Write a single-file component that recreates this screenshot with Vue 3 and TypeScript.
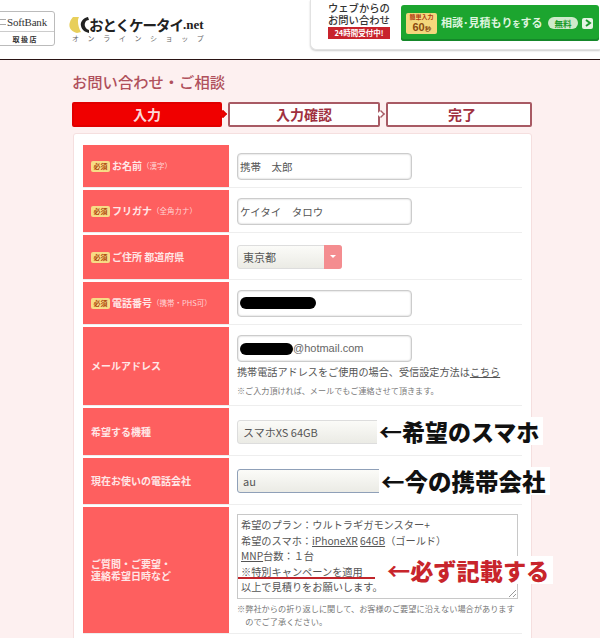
<script setup lang="ts">
const steps = [
  { label: '入力', active: true },
  { label: '入力確認', active: false },
  { label: '完了', active: false },
]
</script>

<template>
  <div class="page">
    <header class="header">
      <div class="sb">
        <div class="sb-top"><span class="sb-bars"></span>SoftBank</div>
        <div class="sb-bot">取 扱 店</div>
      </div>
      <div class="logo">
        <div class="logo-top">
          <svg class="logo-mark" width="20" height="16" viewBox="0 0 20 16">
            <path d="M4 0 L10 0 C8 3 9 10 12 15 L8 16 C2 15 -1 10 1 5 C1.500 3 3 1 4 0 Z" fill="#e8cf5a" />
            <path d="M19 0 C14 1 11 5 12 9 C13 13 16 15 20 16 L20 13 C17 12 15 9 16 6 C16.500 4 18 3 20 3 Z" fill="#222" />
          </svg>
          <span class="logo-name">おとくケータイ</span><span class="logo-net">.net</span>
        </div>
        <div class="logo-sub">オンラインショップ</div>
      </div>
      <div class="cta">
        <div class="cta-text">
          <div class="cta-line">ウェブからの</div>
          <div class="cta-line">お問い合わせ</div>
          <div class="cta-badge">24時間受付中!</div>
        </div>
        <div class="cta-btn">
          <div class="cta-time"><span class="t1">簡単入力</span><span class="t2">60<small>秒</small></span></div>
          <span class="cta-label">相談･見積もり<span class="wo">を</span>する</span>
          <span class="cta-free">無料</span>
          <span class="cta-arrow">
            <svg width="8" height="8" viewBox="0 0 8 8"><path d="M2 1 L6 4 L2 7" fill="none" stroke="#1c9a2c" stroke-width="2" /></svg>
          </span>
        </div>
      </div>
    </header>

    <main class="main">
      <h1 class="title">お問い合わせ・ご相談</h1>
      <div class="steps">
        <div v-for="s in steps" :key="s.label" class="step" :class="{ active: s.active }">{{ s.label }}</div>
      </div>

      <section class="card">
        <div class="row r1">
          <div class="lab"><span class="req">必須</span><b>お名前</b><small>（漢字）</small></div>
          <div class="val"><div class="input">携帯　太郎</div></div>
        </div>
        <div class="row r1">
          <div class="lab"><span class="req">必須</span><b>フリガナ</b><small>（全角カナ）</small></div>
          <div class="val"><div class="input">ケイタイ　タロウ</div></div>
        </div>
        <div class="row r3">
          <div class="lab"><span class="req">必須</span><b>ご住所 都道府県</b></div>
          <div class="val">
            <div class="select small">東京都<span class="caret"></span></div>
          </div>
        </div>
        <div class="row r1">
          <div class="lab"><span class="req">必須</span><b>電話番号</b><small>（携帯・PHS可）</small></div>
          <div class="val"><div class="input"><span class="mask phone"></span></div></div>
        </div>
        <div class="row r5">
          <div class="lab"><b>メールアドレス</b></div>
          <div class="val top">
            <div class="input mail"><span class="mask email"></span>@hotmail.com</div>
            <p class="help">携帯電話アドレスをご使用の場合、受信設定方法は<u>こちら</u></p>
            <p class="note">※ご入力頂ければ、メールでもご連絡させて頂きます。</p>
          </div>
        </div>
        <div class="row r6">
          <div class="lab"><b>希望する機種</b></div>
          <div class="val">
            <div class="select wide">スマホXS 64GB</div>
            <div class="anno black a1"><span class="arrow">←</span>希望のスマホ</div>
          </div>
        </div>
        <div class="row r7">
          <div class="lab"><b>現在お使いの電話会社</b></div>
          <div class="val">
            <div class="select wide focus">au</div>
            <div class="anno black a2"><span class="arrow">←</span>今の携帯会社</div>
          </div>
        </div>
        <div class="row r8">
          <div class="lab"><b>ご質問・ご要望・<br />連絡希望日時など</b></div>
          <div class="val top2">
            <div class="textarea">
              <div>希望のプラン：ウルトラギガモンスター+</div>
              <div>希望のスマホ：<u>iPhoneXR</u> <u>64GB</u>（ゴールド）</div>
              <div><u>MNP</u>台数：１台</div>
              <div class="mark">※特別キャンペーンを適用</div>
              <div>以上で見積りをお願いします。</div>
              <svg class="grip" width="8" height="8" viewBox="0 0 8 8"><path d="M1 8 L8 1 M5 8 L8 5" stroke="#999" /></svg>
            </div>
            <p class="note n2">※弊社からの折り返しに関して、お客様のご要望に沿えない場合があります<br />　のでご了承ください。</p>
            <div class="anno red"><span class="arrow">←</span>必ず記載する</div>
          </div>
        </div>
      </section>
    </main>
  </div>
</template>

<style>
html, body { margin: 0; padding: 0; background: #fdf0f0; }
</style>

<style scoped>
.page {
  width: 600px;
  height: 638px;
  overflow: hidden;
  background: #fdf0f0;
  font-family: "Noto Sans CJK JP", "Liberation Sans", sans-serif;
  color: #444;
}
.header {
  height: 59px;
  background: #fff;
  border-bottom: 1px solid #2a1414;
  display: flex;
  align-items: flex-start;
  overflow: hidden;
  box-sizing: content-box;
}
.sb {
  margin: 11px 0 0 -6px;
  width: 61px;
  height: 35px;
  box-sizing: border-box;
  border: 1px solid #bbb;
  border-radius: 3px;
  flex: none;
}
.sb-top {
  height: 19px;
  border-bottom: 1px solid #ccc;
  font: 11px/18px "Liberation Serif", serif;
  color: #333;
  display: flex;
  align-items: center;
  gap: 1px;
  padding-left: 5px;
  letter-spacing: -.2px;
}
.sb-bars {
  width: 6px;
  height: 4px;
  border-top: 1px solid #aaa;
  border-bottom: 1px solid #aaa;
  flex: none;
}
.sb-bot { font-size: 7px; line-height: 14px; font-weight: 700; text-align: center; color: #333; }
.logo { margin: 16px 0 0 14px; width: 140px; flex: none; }
.logo-top { display: flex; align-items: center; height: 17px; }
.logo-mark { flex: none; }
.logo-name { font-size: 14.5px; line-height: 17px; font-weight: 700; color: #222; letter-spacing: -1px; white-space: nowrap; }
.logo-net { font: 700 13px/17px "Liberation Serif", serif; color: #222; }
.logo-sub { font-size: 7px; letter-spacing: 8.6px; color: #666; line-height: 10px; margin: 0 0 0 3px; white-space: nowrap; }
.cta {
  margin-left: auto;
  width: 290px;
  height: 50px;
  box-sizing: border-box;
  background: #fff;
  border: 1px solid #e2e2e2;
  border-top: 0;
  border-right: 0;
  border-radius: 0 0 0 6px;
  box-shadow: 0 1px 2px #ccc;
  display: flex;
  align-items: flex-start;
  flex: none;
}
.cta-text { width: 90px; padding: 2px 0 0 17px; box-sizing: border-box; }
.cta-line { font-size: 10.3px; line-height: 12px; font-weight: 500; color: #333; white-space: nowrap; }
.cta-badge {
  background: #c8232c;
  color: #fff;
  font-size: 7.5px;
  font-weight: 700;
  line-height: 12px;
  height: 12px;
  width: 62px;
  margin: 1px 0 0 0;
  white-space: nowrap;
  text-align: center;
}
.cta-btn {
  margin: 5px 0 0 0;
  width: 198px;
  height: 36px;
  background: #1ca52f;
  border-radius: 3px;
  box-shadow: inset 0 -2px 0 #15872a;
  display: flex;
  align-items: center;
  padding-left: 5px;
  box-sizing: border-box;
  color: #fff;
}
.cta-time {
  width: 31px;
  height: 21px;
  background: #f4d77c;
  border-radius: 2px;
  display: flex;
  flex-direction: column;
  align-items: center;
  color: #8a4a10;
  flex: none;
}
.t1 { font-size: 6px; line-height: 8px; font-weight: 700; color: #b03a10; white-space: nowrap; }
.t2 { font: 700 11px/12px "Liberation Sans", sans-serif; }
.t2 small { font-size: 6px; }
.cta-label { font-size: 11px; line-height: 14px; font-weight: 700; margin-left: 4px; white-space: nowrap; color: #dff5df; width: 104px; flex: none; }
.wo { font-size: 8px; }
.cta-free {
  background: #cfeacb;
  color: #1c9a2c;
  font-size: 8.5px;
  font-weight: 700;
  width: 30px;
  height: 12px;
  line-height: 12px;
  border-radius: 6px;
  text-align: center;
  margin-left: 3px;
  flex: none;
}
.cta-arrow {
  width: 11px;
  height: 11px;
  background: #e4f4e2;
  border-radius: 2px;
  margin-left: 4px;
  display: flex;
  align-items: center;
  justify-content: center;
  flex: none;
}
.main { padding: 0 68px 0 72px; }
.title { margin: 0; padding-top: 11px; height: 31px; font-size: 15.3px; line-height: 20px; font-weight: 500; color: #b0505c; white-space: nowrap; }
.steps { display: flex; gap: 6px; height: 25px; }
.step {
  flex: 152px 0 0;
  position: relative;
  box-sizing: border-box;
  background: #fff;
  border: 2px solid #a85a64;
  border-radius: 2px;
  text-align: center;
  font-size: 14px;
  font-weight: 700;
  line-height: 21px;
  color: #a03040;
}
.step:first-child { flex-basis: 150px; }
.step:last-child { flex-basis: 146px; padding-left: 6px; }
.step.active { background: #f00000; border-color: #e00000; color: #fbd8d8; }
.step:not(:last-child)::after {
  content: "";
  position: absolute;
  right: -7px;
  top: 6px;
  width: 8px;
  height: 8px;
  background: #fff;
  border-top: 2px solid #a85a64;
  border-right: 2px solid #a85a64;
  transform: rotate(45deg) scale(.7);
  box-sizing: border-box;
}
.step.active::after { background: #f00000; border-color: #e00000; }
.card {
  margin-top: 6px;
  width: 459px;
  margin-left: 1px;
  box-sizing: border-box;
  background: #fff;
  border: 1px solid #f5dfdf;
  border-radius: 3px;
  padding: 11px 9px 0 9px;
  height: 520px;
}
.row { display: flex; border-bottom: 1px solid #eee; margin-bottom: 2px; box-sizing: border-box; }
.r1 { height: 43px; }
.r3 { height: 45px; }
.r5 { height: 79px; }
.r6 { height: 48px; }
.r7 { height: 47px; }
.r8 { height: 127px; }
.lab {
  width: 146px;
  flex: none;
  background: #fe5f5f;
  color: #ffe6e6;
  display: flex;
  align-items: center;
  padding-left: 8px;
  box-sizing: border-box;
  font-size: 10px;
  white-space: nowrap;
  line-height: 12px;
}
.lab b { font-weight: 700; }
.lab small { font-size: 7.5px; margin-left: 0; color: #ffd5d5; }
.req {
  background: #f7dc85;
  color: #b04a10;
  font-size: 7px;
  font-weight: 700;
  width: 19px;
  height: 11px;
  line-height: 11px;
  border-radius: 2px;
  text-align: center;
  margin-right: 2px;
  flex: none;
}
.val {
  flex: 1;
  position: relative;
  padding-left: 8px;
  display: flex;
  flex-direction: column;
  justify-content: center;
  min-width: 0;
}
.val.top { justify-content: flex-start; padding-top: 8px; }
.val.top2 { justify-content: flex-start; padding-top: 7px; }
.input {
  width: 175px;
  height: 27px;
  box-sizing: border-box;
  background: #fff;
  border: 1px solid #ccc;
  box-shadow: inset 0 0 2px #bbb;
  border-radius: 4px;
  font-size: 10.5px;
  line-height: 25px;
  padding-left: 2px;
  color: #555;
  display: flex;
  align-items: center;
  white-space: nowrap;
}
.input.mail { font-family: "Liberation Sans", sans-serif; font-size: 11px; color: #666; }
.mask { display: inline-block; height: 12px; background: #000; border-radius: 6px; }
.phone { width: 76px; }
.email { width: 53px; }
.select {
  height: 24px;
  box-sizing: border-box;
  background: linear-gradient(#fbfbf8, #ebebe5);
  border: 1px solid #ddd;
  border-radius: 3px;
  font-size: 11px;
  line-height: 22px;
  padding-left: 5px;
  color: #555;
  white-space: nowrap;
  position: relative;
}
.select.small { width: 105px; }
.select.wide { width: 148px; }
.select.focus { border-color: #8fa0b8; }
.caret {
  position: absolute;
  right: -1px;
  top: -1px;
  bottom: -1px;
  width: 18px;
  background: #f48d90;
  border-radius: 0 3px 3px 0;
}
.caret::after {
  content: "";
  position: absolute;
  left: 6px;
  top: 10px;
  border: 3px solid transparent;
  border-top-color: #fff;
}
.help { margin: 2px 0 0; font-size: 10.15px; line-height: 16px; color: #555; white-space: nowrap; }
.note { margin: 5px 0 0; font-size: 8.1px; line-height: 12px; color: #777; white-space: nowrap; }
.n2 { margin-top: 3px; font-size: 8.2px; line-height: 13px; }
.textarea {
  position: relative;
  width: 281px;
  height: 85px;
  box-sizing: border-box;
  border: 1px solid #c8c8c8;
  padding: 2px 3px;
  font-size: 10.2px;
  line-height: 15.5px;
  color: #555;
  white-space: nowrap;
  background: #fff;
}
.mark { position: relative; }
.mark::after {
  content: "";
  position: absolute;
  left: -3px;
  top: 13px;
  width: 137px;
  height: 2px;
  background: #c0252b;
}
.grip { position: absolute; right: 1px; bottom: 1px; }
.anno {
  position: absolute;
  font-weight: 900;
  white-space: nowrap;
  background: #fff;
  line-height: 28px;
  padding: 0 4px 0 2px;
}
.arrow { font-weight: 700; }
.black { color: #111; font-size: 23px; }
.a1 { left: 148px; top: 9px; }
.a2 { left: 150px; top: 9px; font-size: 23.5px; }
.red { color: #c8252b; font-size: 23.2px; left: 156px; top: 49px; }
</style>
